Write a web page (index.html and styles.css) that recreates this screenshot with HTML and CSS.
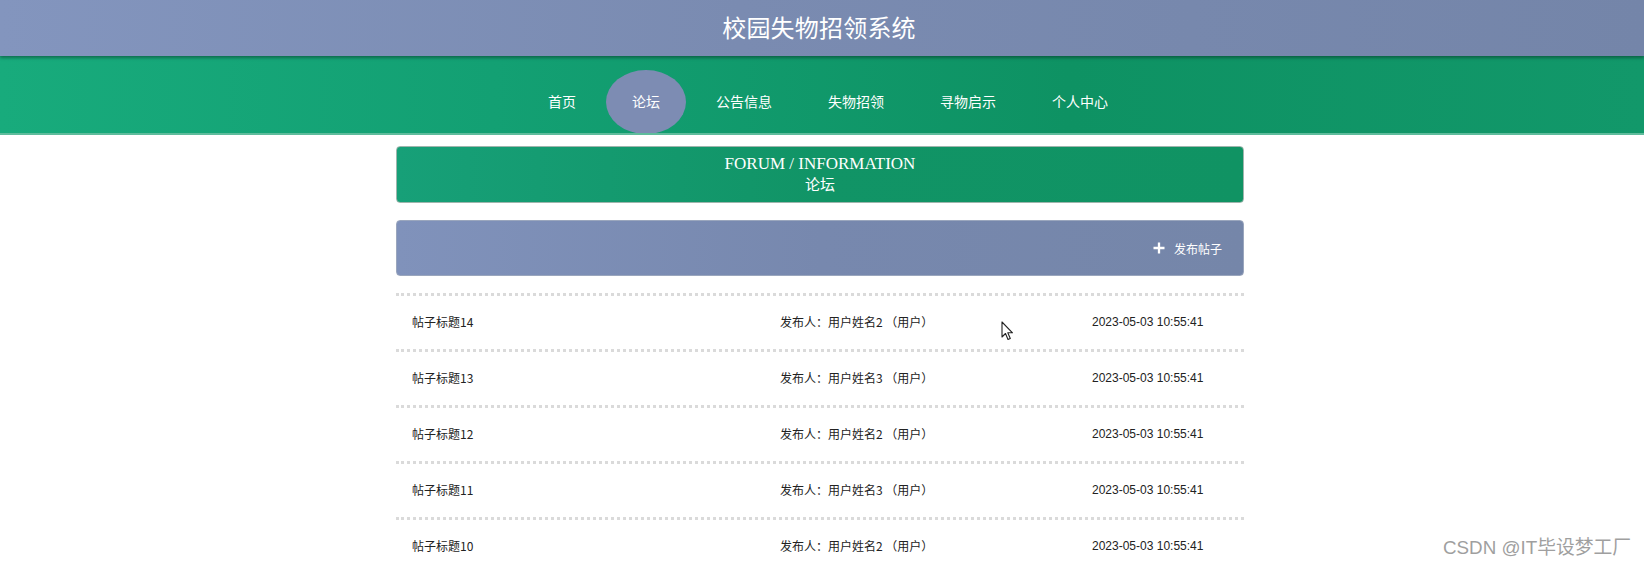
FILE: index.html
```html
<!DOCTYPE html>
<html lang="zh-CN">
<head>
<meta charset="utf-8">
<title>校园失物招领系统</title>
<link rel="stylesheet" href="styles.css">
</head>
<body>
<header class="top">
  <h1 class="site-title">校园失物招领系统</h1>
</header>
<nav class="nav">
  <ul class="menu">
    <li class="menu-item">首页</li>
    <li class="menu-item active">论坛</li>
    <li class="menu-item">公告信息</li>
    <li class="menu-item">失物招领</li>
    <li class="menu-item">寻物启示</li>
    <li class="menu-item">个人中心</li>
  </ul>
</nav>
<main class="content">
  <section class="heading">
    <div class="heading-en">FORUM / INFORMATION</div>
    <div class="heading-cn">论坛</div>
  </section>
  <section class="toolbar">
    <button class="post-btn">
      <svg class="plus" width="12" height="12" viewBox="0 0 12 12"><path d="M6 0.5v11M0.5 6h11" stroke="#fff" stroke-width="2.3"/></svg>
      <span>发布帖子</span>
    </button>
  </section>
  <ul class="posts">
    <li class="post"><span class="p-title">帖子标题14</span><span class="p-user">发布人：用户姓名2 （用户）</span><span class="p-date">2023-05-03 10:55:41</span></li>
    <li class="post"><span class="p-title">帖子标题13</span><span class="p-user">发布人：用户姓名3 （用户）</span><span class="p-date">2023-05-03 10:55:41</span></li>
    <li class="post"><span class="p-title">帖子标题12</span><span class="p-user">发布人：用户姓名2 （用户）</span><span class="p-date">2023-05-03 10:55:41</span></li>
    <li class="post"><span class="p-title">帖子标题11</span><span class="p-user">发布人：用户姓名3 （用户）</span><span class="p-date">2023-05-03 10:55:41</span></li>
    <li class="post"><span class="p-title">帖子标题10</span><span class="p-user">发布人：用户姓名2 （用户）</span><span class="p-date">2023-05-03 10:55:41</span></li>
  </ul>
</main>
<div class="watermark">CSDN @IT毕设梦工厂</div>
<svg class="cursor" width="13" height="20" viewBox="0 0 13 20"><path d="M1 1 L1 16 L4.5 12.5 L7 18.5 L9.3 17.5 L6.8 11.8 L11.5 11.8 Z" fill="#fff" stroke="#222" stroke-width="1.1" stroke-linejoin="round"/></svg>
</body>
</html>
```
FILE: styles.css
```css
html, body {
  margin: 0;
  padding: 0;
  overflow: hidden;
  background: #fff;
  font-family: "Liberation Sans", "Noto Sans CJK SC", sans-serif;
}
.top {
  position: relative;
  z-index: 2;
  height: 56px;
  background: linear-gradient(90deg, #8395be 0%, #7a8bb1 45%, #7485a9 100%);
  box-shadow: 0 2px 3px rgba(0, 0, 0, 0.35);
  display: flex;
  align-items: center;
  justify-content: center;
}
.site-title {
  margin: 0 6px 2px 0;
  font-family: "Noto Sans CJK SC", sans-serif;
  font-weight: 400;
  font-size: 24px;
  line-height: 54px;
  color: #fff;
  letter-spacing: 0.2px;
}
.nav {
  height: 77px;
  background: linear-gradient(90deg, #18ab7c 0%, #13a073 30%, #0e9263 65%, #12986a 100%);
  border-bottom: 2px solid #5fbc9c;
  overflow: hidden;
}
.menu {
  list-style: none;
  margin: 0;
  padding: 14px 0 0 12px;
  display: flex;
  justify-content: center;
  gap: 4px;
}
.menu-item {
  height: 64px;
  line-height: 63px;
  padding: 0 26px;
  font-family: "Noto Sans CJK SC", sans-serif;
  font-size: 14px;
  color: #fff;
  border-radius: 50%;
  white-space: nowrap;
}
.menu-item.active {
  background: #7d8cb3;
}
.content {
  width: 848px;
  margin: 11px 0 0 calc(50% - 426px);
}
.heading {
  height: 48px;
  padding-top: 7px;
  border: 1px solid #9fb5ad;
  border-radius: 4px;
  background: linear-gradient(90deg, #17a078 0%, #119466 50%, #109363 100%);
  color: #fff;
  text-align: center;
}
.heading-en {
  font-family: "Liberation Serif", serif;
  font-size: 17px;
  line-height: 19px;
}
.heading-cn {
  font-family: "Noto Sans CJK SC", serif;
  font-size: 15px;
  line-height: 22px;
}
.toolbar {
  margin-top: 17px;
  height: 54px;
  border: 1px solid #9aa6bd;
  border-radius: 4px;
  background: linear-gradient(90deg, #8092bb 0%, #7788ae 50%, #7586a9 100%);
  display: flex;
  align-items: center;
  justify-content: flex-end;
  padding-right: 21px;
}
.post-btn {
  border: 0;
  background: none;
  padding: 0;
  color: #fff;
  font-family: "Noto Sans CJK SC", sans-serif;
  font-size: 12px;
  display: flex;
  align-items: center;
  gap: 9px;
}
.posts {
  list-style: none;
  margin: 17px 0 0;
  padding: 0;
}
.post {
  box-sizing: border-box;
  border-top: 3px dotted #dadada;
  height: 56px;
  padding: 0 16px 2px;
  display: grid;
  grid-template-columns: 368px 312px auto;
  align-items: center;
  font-size: 12px;
  color: #222;
}
.p-title, .p-user {
  font-family: "Noto Sans CJK SC", sans-serif;
}
.p-date {
  font-family: "Liberation Sans", sans-serif;
}
.watermark {
  position: absolute;
  left: 1443px;
  top: 536px;
  font-size: 18.8px;
  line-height: 24px;
  color: #9f9f9f;
  font-family: "Liberation Sans", "Noto Sans CJK SC", sans-serif;
  text-shadow: 0 0 1px #fff;
}
.cursor {
  position: absolute;
  left: 1001px;
  top: 321px;
}
```
